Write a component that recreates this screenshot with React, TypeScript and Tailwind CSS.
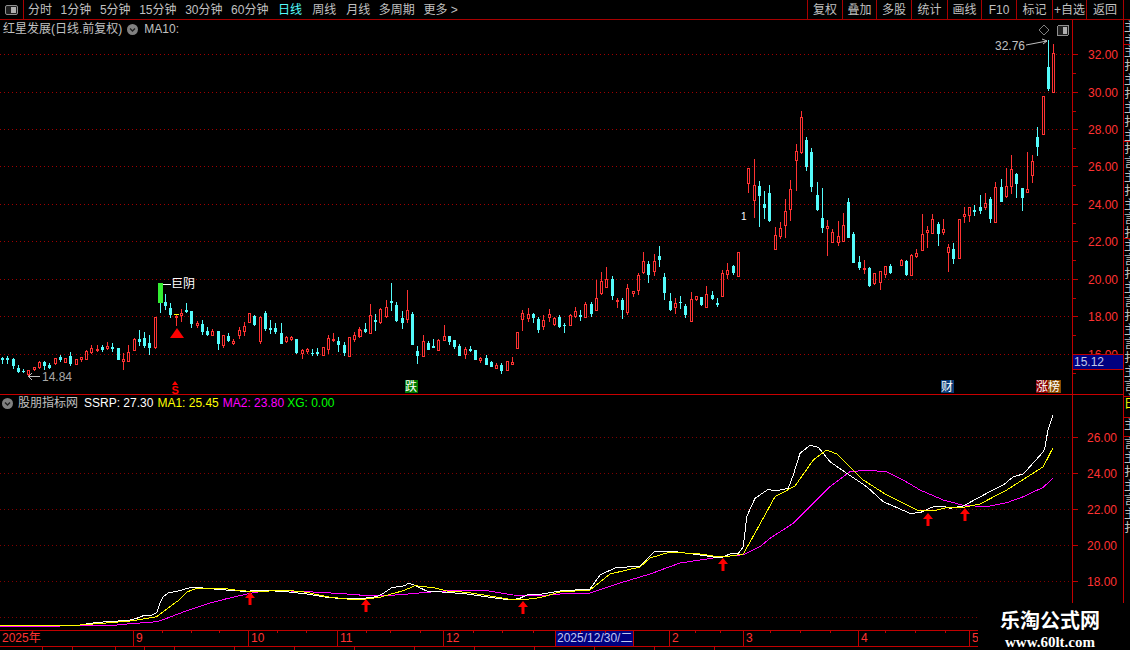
type Raw = [number, number, number, number, number, "r" | "c"];

// candles, read off in zoomed coordinates: x, high, body top, body bottom, low
const groupA: Raw[] = [
  [7,260,264,268,278,"c"],[21,258,264,266,278,"c"],[40,264,268,286,294,"c"],[55,285,293,302,306,"c"],[70,298,302,304,306,"c"],
  [85,300,300,312,316,"r"],[103,292,292,297,300,"r"],[118,272,276,290,294,"r"],[133,274,276,286,296,"c"],[148,280,284,290,294,"c"],
  [166,264,265,279,282,"r"],[181,256,260,268,274,"c"],[196,264,265,275,276,"r"],[211,246,258,280,284,"c"],[229,266,268,281,282,"r"],
  [244,260,262,266,272,"r"],[259,240,244,266,268,"r"],[274,224,234,245,248,"r"],[291,226,236,237,242,"r"],[307,226,230,236,242,"c"],
  [322,216,228,234,238,"r"],[337,220,232,234,242,"c"],[355,234,234,266,268,"c"],[370,250,268,274,296,"r"],[385,226,246,272,274,"r"],
  [403,204,208,239,240,"r"],[418,180,208,212,224,"c"],[433,186,204,226,232,"c"],[448,194,220,232,252,"c"],[466,140,142,231,234,"r"],
  [496,72,96,104,118,"c"],[511,98,114,132,140,"c"],[529,135,137,140,165,"r"],[544,116,130,136,152,"r"],[559,100,120,124,126,"c"],
  [574,124,124,158,172,"c"],[592,154,160,166,172,"r"],[607,150,162,184,192,"c"],[622,170,184,192,196,"c"],[637,178,184,194,196,"r"],
  [655,184,184,218,236,"c"],[670,194,196,226,230,"r"],[685,188,198,210,214,"c"],[700,208,212,218,222,"r"],[718,172,180,196,204,"r"],
  [733,156,168,182,194,"r"],[748,128,130,156,156,"r"],[763,136,138,162,166,"c"],[781,138,140,214,218,"r"],[796,124,130,174,180,"c"],
  [811,150,174,177,188,"c"],[826,160,174,184,190,"c"],[844,160,190,218,220,"c"],[859,198,202,214,216,"r"],[874,198,202,208,210,"r"],
  [889,208,208,246,250,"c"],[907,238,240,250,264,"r"],[922,235,238,244,248,"r"],[937,238,248,249,254,"c"],[952,234,246,250,254,"c"],
  [970,232,232,254,256,"r"],[985,196,204,236,248,"r"],[1000,190,208,209,214,"r"],[1015,202,214,222,242,"c"],[1033,216,226,246,254,"c"],
  [1048,200,202,257,258,"r"],[1063,186,196,208,214,"r"],[1078,172,178,198,200,"r"],
];

const groupB: Raw[] = [
  [0,270,270,288,288,"r"],[16,250,266,274,276,"c"],[31,192,226,278,278,"r"],[46,222,240,242,270,"c"],[61,205,207,247,248,"r"],
  [79,180,202,228,230,"r"],[94,128,183,185,210,"c"],[109,186,196,240,242,"c"],[127,214,234,246,264,"c"],[142,150,211,237,245,"r"],
  [157,216,222,312,312,"c"],[172,318,334,345,368,"c"],[190,285,304,347,348,"r"],[205,304,309,326,328,"c"],[220,297,318,320,322,"c"],
  [235,298,300,329,330,"r"],[253,255,289,299,300,"r"],[268,288,288,302,312,"c"],[283,300,300,318,324,"c"],[298,312,318,344,346,"c"],
  [316,322,327,341,354,"r"],[331,318,326,329,334,"c"],[346,330,330,357,358,"c"],[361,350,354,360,366,"r"],[379,346,354,372,372,"c"],
  [394,362,366,378,378,"c"],[409,370,376,383,384,"r"],[424,370,375,390,398,"c"],[442,364,364,389,390,"r"],[457,350,366,372,372,"r"],
  [472,277,277,323,324,"r"],[487,210,220,236,270,"r"],[505,204,222,234,244,"r"],[520,220,222,231,246,"c"],[535,232,238,267,276,"c"],
  [550,225,240,258,268,"r"],[568,207,222,231,244,"r"],[583,230,234,252,255,"r"],[598,226,232,259,262,"c"],[613,250,254,256,276,"c"],
  [631,222,226,254,256,"r"],[646,200,214,228,232,"r"],[661,210,226,228,240,"c"],[676,186,192,231,232,"r"],[694,186,192,219,228,"c"],
  [709,120,175,209,210,"r"],[724,96,124,159,162,"r"],[739,82,118,140,142,"r"],[757,108,117,165,178,"c"],[772,174,180,182,202,"r"],
  [787,174,180,207,234,"c"],[802,132,144,216,222,"r"],[820,154,154,160,168,"r"],[835,98,105,150,162,"r"],[850,36,64,96,100,"r"],
  [865,62,72,102,126,"c"],[883,42,64,92,104,"r"],[898,18,48,56,78,"c"],[913,99,111,156,178,"c"],[931,159,183,207,210,"c"],
  [946,174,190,200,219,"r"],[961,168,185,187,204,"c"],[976,192,198,222,231,"c"],[994,156,178,242,243,"r"],[1009,168,169,177,180,"r"],
  [1024,171,171,192,195,"c"],[1039,138,162,200,202,"r"],[1057,153,165,175,178,"c"],[1072,174,189,191,198,"c"],[1087,90,99,167,168,"r"],
  [1102,69,91,102,114,"r"],[1120,75,78,96,102,"c"],[1135,36,36,107,108,"r"],
];

const groupC: Raw[] = [
  [55,205,205,248,276,"r"],[73,177,255,300,351,"r"],[88,243,258,285,378,"c"],[103,273,312,321,354,"c"],[118,255,279,360,363,"c"],
  [136,381,405,447,447,"r"],[151,366,384,408,414,"r"],[166,297,333,375,411,"r"],[181,240,267,327,360,"r"],[199,132,153,180,270,"r"],
  [214,33,51,156,159,"r"],[229,111,120,198,210,"c"],[244,144,156,258,273,"c"],[262,246,285,327,330,"c"],[277,264,354,381,396,"c"],
  [292,360,378,384,465,"r"],[307,387,396,426,426,"r"],[325,363,408,426,435,"r"],[340,339,375,423,423,"r"],[355,294,306,411,411,"c"],
  [370,396,402,486,486,"c"],[388,468,486,501,507,"c"],[403,480,504,506,519,"r"],[418,501,504,555,558,"c"],[433,519,519,549,552,"r"],
  [451,513,514,546,567,"r"],[466,498,498,522,531,"r"],[481,492,498,516,519,"c"],[514,477,480,495,495,"r"],[529,480,483,522,525,"c"],
  [544,462,465,525,525,"r"],[559,447,459,468,471,"r"],[577,342,402,450,450,"r"],[592,378,390,396,441,"r"],[607,342,357,399,399,"r"],
  [625,366,372,399,435,"c"],[640,357,387,396,402,"r"],[655,432,441,456,513,"r"],[670,429,447,474,489,"c"],[688,357,357,474,474,"r"],
  [703,321,342,348,366,"r"],[718,321,321,345,363,"r"],[733,315,330,332,345,"c"],[751,285,321,330,339,"c"],[766,279,309,321,327,"r"],
  [781,291,297,354,366,"c"],[796,246,261,366,366,"r"],[814,237,261,303,303,"c"],[829,204,258,288,291,"r"],[844,165,207,258,279,"r"],
  [859,219,222,249,291,"c"],[877,264,264,291,330,"c"],[892,156,267,276,276,"r"],[907,165,183,225,246,"r"],[922,81,111,138,165,"c"],
];

const toPage = (list: Raw[], ox: number, oy: number) =>
  list.map(([x, hi, top, bot, lo, kind]) => ({
    x: Math.round(ox + x / 3),
    hi: Math.round(oy + hi / 3),
    top: Math.round(oy + top / 3),
    bot: Math.round(oy + bot / 3),
    lo: Math.round(oy + lo / 3),
    kind,
  }));

const candles = [
  ...toPage(groupA, 0, 270),
  ...toPage(groupB, 360, 240),
  ...toPage(groupC, 730, 100),
  { x: 1043, hi: 96, top: 96, bot: 134, lo: 134, kind: "r" as const },
  { x: 1048, hi: 40, top: 67, bot: 88, lo: 90, kind: "c" as const },
  { x: 1053, hi: 44, top: 53, bot: 92, lo: 92, kind: "r" as const },
];

const RED = "#ff3232";
const CYAN = "#54fcfc";

const line = (a: number[][], ox: number, oy: number) =>
  a.map(([x, y]) => `${(ox + x / 3).toFixed(1)},${(oy + y / 3).toFixed(1)}`).join(" ");

// indicator curves: early part, middle part, late part
const whiteLine = [
  "0,625 60,625",
  line([[0,195],[30,190],[90,184],[140,182],[170,175],[190,167],[215,165],[230,158],[240,130],[250,110],[265,99],[295,93],[330,83],[360,83],[410,88],[480,93],[510,93],[560,92],[610,94],[680,102],[740,112],[800,117],[850,115],[890,110],[910,100],[935,83],[975,77],[985,70],[1000,74],[1040,93],[1100,97],[1160,102],[1230,112],[1290,120],[1320,115],[1340,105],[1380,103]], 80, 560),
  "560,591 590,589 600,575 615,568 640,566 655,551 670,551 700,555 720,558",
  line([[0,372],[25,370],[40,350],[50,260],[75,205],[115,178],[135,183],[175,175],[190,135],[210,70],[240,46],[265,52],[300,95],[350,130],[410,170],[460,215],[540,250],[570,248],[610,230],[640,228],[660,235],[700,228],[770,190],[820,165],[850,140],[880,132],[940,65],[945,51]], 730, 430),
  "1045,447 1048,430 1053,415",
].join(" ");

const yellowLine = [
  "0,625 46,625",
  line([[0,195],[90,188],[160,182],[230,170],[270,140],[300,118],[320,97],[340,88],[360,85],[430,85],[480,92],[540,95],[610,90],[680,97],[740,110],[800,117],[850,118],[900,112],[930,103],[970,92],[1005,77],[1060,83],[1100,93],[1160,97],[1230,108],[1290,118],[1340,118],[1380,113]], 80, 560),
  "560,592 590,590 610,574 640,567 650,558 670,552 700,554 720,557",
  line([[0,378],[40,372],[80,300],[135,200],[195,168],[250,90],[290,60],[320,72],[400,150],[470,195],[560,240],[610,243],[650,233],[700,232],[750,222],[830,180],[940,110],[968,55]], 730, 430),
].join(" ");

const magentaLine = [
  "0,626 60,626",
  line([[0,197],[90,197],[140,192],[230,185],[260,175],[320,152],[380,132],[440,116],[510,100],[560,92],[610,92],[680,95],[740,98],[800,102],[850,106],[900,108],[960,104],[1040,97],[1110,92],[1220,92],[1300,105],[1380,108]], 80, 560),
  "560,594 590,593 620,583 650,574 680,563 720,557",
  line([[40,374],[90,350],[120,325],[190,280],[300,170],[360,125],[410,121],[470,125],[520,150],[570,180],[640,210],[700,226],[770,230],[830,218],[880,200],[940,172],[968,145]], 730, 430),
].join(" ");

const upperPrices = [
  [54, "32.00"], [92, "30.00"], [129, "28.00"], [166, "26.00"], [204, "24.00"], [241, "22.00"], [279, "20.00"], [316, "18.00"], [354, "16.00"],
] as const;
const lowerPrices = [
  [437, "26.00"], [473, "24.00"], [509, "22.00"], [545, "20.00"], [581, "18.00"], [617, ""],
] as const;
const arrows = [[250, 592], [366, 599], [523, 601], [723, 558], [928, 513], [965, 508]];

const navItems: [string, string][] = [
  ["分时", ""], ["1分钟", ""], ["5分钟", ""], ["15分钟", ""], ["30分钟", ""], ["60分钟", ""],
  ["日线", "ml-[1px] text-[#54fcfc]"], ["周线", "ml-[1.5px]"], ["月线", "ml-[1.5px]"], ["多周期", ""], ["更多 >", ""],
];
const buttons: [string, string][] = [
  ["复权", "w-[35px]"], ["叠加", "w-[34px]"], ["多股", "w-[35px]"], ["统计", "w-[36px]"], ["画线", "w-[34px]"],
  ["F10", "w-[35px]"], ["标记", "w-[36px]"], ["+自选", "w-[34px]"], ["返回", "w-[37px]"],
];
const axisCells: [string, string][] = [
  ["2025年", "w-[133px]"], ["9", "w-[115px]"], ["10", "w-[89px]"], ["11", "w-[106px]"], ["12", "w-[112px]"],
];
const axisCellsEnd: [string, string][] = [
  ["2", "w-[74px]"], ["3", "w-[115px]"], ["4", "w-[111px]"], ["5", "w-[9px]"],
];
const sideSections: [string, string, string][] = [
  ["主主", "h-[25px]", "text-[#c0c0c0]"],
  ["主扌主扌主扌主", "h-[97px]", "text-[#c0c0c0]"],
  ["扌言主扌主言扌", "h-[97px]", "text-[#c0c0c0]"],
  ["主言扌主言扌主言扌主言主", "h-[158px]", "text-[#c0c0c0]"],
  ["日", "h-[21px]", "text-[#ffff00]"],
  ["主", "h-[19px]", "text-[#c0c0c0]"],
  ["言主扌主言主扌", "h-[173px]", "text-[#c0c0c0]"],
];
const stripWidths = ["w-[43px]", "w-[30px]", "w-[43px]", "w-[29px]", "w-[30px]", "w-[60px]", "w-[60px]", "w-[60px]", "w-[60px]", "w-[60px]", "w-[60px]", "w-[60px]", "w-[60px]", "w-[60px]"];

function PanelIcon() {
  return (
    <svg width="13" height="10" viewBox="0 0 13 10">
      <rect x="0.5" y="0.5" width="12" height="9" rx="1.5" fill="#202020" stroke="#909090" />
      <rect x="6" y="2" width="5" height="6" fill="#b0b0b0" />
    </svg>
  );
}

function ChevronBadge() {
  return (
    <svg width="11" height="11" viewBox="0 0 11 11">
      <circle cx="5.5" cy="5.5" r="5.5" fill="#808080" />
      <path d="M3 4.5 L5.5 7 L8 4.5" fill="none" stroke="#202020" strokeWidth="1.4" />
    </svg>
  );
}

function Dotted({ y, to = 1072, color = "#a00000" }: { y: number; to?: number; color?: string }) {
  return <line x1="0" x2={to} y1={y + 0.5} y2={y + 0.5} stroke={color} strokeDasharray="1 3" shapeRendering="auto" />;
}

function Marker({ x, w, label, bg }: { x: number; w: number; label: string; bg: string }) {
  return (
    <g>
      <rect x={x} y="380" width={w} height="13" fill={bg} />
      <text x={x} y="391" fontSize="12" fill="#ffffff">{label}</text>
    </g>
  );
}

function UpperChart() {
  return (
    <svg className="block" width="1123" height="374" viewBox="0 20 1123 374" shapeRendering="crispEdges">
      {upperPrices.map(([y]) => <Dotted key={y} y={y} />)}
      {candles.map((c, i) =>
        c.kind === "c" ? (
          <g key={i} fill={CYAN}>
            <rect x={c.x} y={c.hi} width="1" height={c.lo - c.hi + 1} />
            <rect x={c.x - 1} y={c.top} width="3" height={c.bot - c.top + 1} />
          </g>
        ) : (
          <g key={i}>
            <rect x={c.x} y={c.hi} width="1" height={c.lo - c.hi + 1} fill={RED} />
            <rect x={c.x - 0.5} y={c.top + 0.5} width="2" height={Math.max(c.bot - c.top, 1)} fill="#000000" stroke={RED} />
          </g>
        ),
      )}
      {/* 巨阴 bar */}
      <rect x="160" y="303" width="1" height="10" fill={CYAN} />
      <rect x="158" y="283" width="5" height="20" fill="#33ee33" />
      <rect x="163" y="284" width="8" height="1" fill="#ffffff" />
      <text x="171" y="288" fontSize="12" fill="#ffffff">巨阴</text>
      <rect x="174" y="314" width="5" height="1" fill="#ffff00" />
      <polygon points="177,328 184,338 170,338" fill="#ff0000" shapeRendering="auto" />
      <polygon points="175,381 178,385 172,385" fill="#ff0000" shapeRendering="auto" />
      <text x="171.5" y="393.5" fontSize="11" fontWeight="700" fill="#ff0000">S</text>

      <rect x="28" y="376" width="12" height="1" fill="#c0c0c0" />
      <polyline points="32,373 28.5,376.5 32,380" fill="none" stroke="#c0c0c0" shapeRendering="auto" />
      <text x="42" y="381" fontSize="12" fill="#a8a8a8">14.84</text>
      <text x="995" y="50" fontSize="12" fill="#c0c0c0">32.76</text>
      <polyline points="1026,45 1047,41" fill="none" stroke="#c0c0c0" shapeRendering="auto" />
      <polyline points="1042,39 1047,41 1043,44" fill="none" stroke="#c0c0c0" shapeRendering="auto" />
      <polygon points="1044,25 1049,30 1044,35 1039,30" fill="none" stroke="#808080" shapeRendering="auto" />
      <g transform="translate(1057 25)">
        <rect x="0.5" y="0.5" width="11" height="10" rx="1.5" fill="#202020" stroke="#909090" />
        <rect x="6" y="2" width="4" height="7" fill="#b0b0b0" />
      </g>
      <text x="741" y="220" fontSize="10" fill="#ffffff">1</text>

      <Marker x={405} w={13} label="跌" bg="#007a00" />
      <Marker x={941} w={13} label="财" bg="#0a3c78" />
      <Marker x={1036} w={12} label="涨" bg="#8a0000" />
      <Marker x={1048} w={13} label="榜" bg="#8a4c00" />

      {/* price scale */}
      <rect x="1072" y="20" width="1" height="374" fill="#c00000" />
      {upperPrices.map(([y, label]) => (
        <g key={y}>
          <rect x="1073" y={y} width="5" height="1" fill="#c00000" />
          <rect x="1073" y={y + 19} width="3" height="1" fill="#c00000" />
          <text x="1088" y={y + 4.5} fontSize="12" fill={RED}>{label}</text>
        </g>
      ))}
    </svg>
  );
}

function LowerChart() {
  return (
    <svg className="block" width="1123" height="235" viewBox="0 395 1123 235">
      <g shapeRendering="crispEdges">
        {lowerPrices.map(([y]) => <Dotted key={y} y={y} color="#800000" />)}
        <rect x="1072" y="395" width="1" height="235" fill="#c00000" />
        {lowerPrices.map(([y, label]) => (
          <g key={y}>
            <rect x="1073" y={y} width="5" height="1" fill="#c00000" />
            <text x="1087" y={y + 4.5} fontSize="12" fill={RED}>{label}</text>
          </g>
        ))}
      </g>
      <g shapeRendering="crispEdges" fill="none" strokeWidth="1">
        <polyline points={magentaLine} stroke="#ff00ff" />
        <polyline points={whiteLine} stroke="#ffffff" />
        <polyline points={yellowLine} stroke="#ffff00" />
      </g>
      {arrows.map(([x, y]) => (
        <polygon
          key={x}
          points={`${x},${y} ${x + 5},${y + 6} ${x + 1.5},${y + 6} ${x + 1.5},${y + 13} ${x - 1.5},${y + 13} ${x - 1.5},${y + 6} ${x - 5},${y + 6}`}
          fill="#ff0000"
        />
      ))}
    </svg>
  );
}

export default function App() {
  return (
    <div className="relative flex flex-col w-[1130px] h-[650px] overflow-hidden bg-black text-[12px] leading-[14px] text-[#c0c0c0] font-['Liberation_Sans','Noto_Sans_CJK_SC',sans-serif]">
      {/* top toolbar */}
      <div className="flex h-[20px] shrink-0 items-stretch border-b border-[#a80000]">
        <div className="flex w-[24px] items-center justify-center border-r border-[#a80000] pr-[1px]">
          <PanelIcon />
        </div>
        <div className="flex flex-1 items-center gap-[8.6px] pl-[4px]">
          {navItems.map(([item, cls]) => (
            <span key={item} className={cls}>{item}</span>
          ))}
        </div>
        {buttons.map(([label, width]) => (
          <div key={label} className={`flex items-center justify-center border-l border-[#a80000] ${width}`}>{label}</div>
        ))}
        <div className="w-[7px] border-l border-[#a80000]" />
      </div>

      <div className="flex flex-1 min-h-0">
        <div className="flex w-[1123px] flex-col">
          {/* candlestick pane */}
          <div className="relative h-[375px] border-b border-[#c80000]">
            <UpperChart />
            <div className="absolute left-[3px] top-[2px] flex items-center">
              <span>红星发展(日线.前复权)</span>
              <span className="ml-[5px] flex"><ChevronBadge /></span>
              <span className="ml-[6px]">MA10:</span>
            </div>
            <div className="absolute left-[1073px] top-[334px] flex h-[16px] w-[50px] items-center border-y border-[#c00000] bg-[#000080] pl-[1px] text-[#c0c8e8]">
              15.12
            </div>
          </div>

          {/* indicator pane */}
          <div className="relative h-[235px]">
            <LowerChart />
            <div className="absolute left-[2px] top-[1px] flex items-center">
              <ChevronBadge />
              <span className="ml-[5px]">股朋指标网</span>
              <span className="ml-[6px] text-white">SSRP: 27.30</span>
              <span className="ml-[4px] text-[#ffff00]">MA1: 25.45</span>
              <span className="ml-[4px] text-[#ff00ff]">MA2: 23.80</span>
              <span className="ml-[3px] text-[#00ff00]">XG: 0.00</span>
            </div>
          </div>

          {/* time axis */}
          <div className="relative flex h-[17px] border-y border-[#c00000] text-[#ff3232]">
            {axisCells.map(([label, width], i) => (
              <div key={label} className={`${width} pl-[2px] leading-[15px] ${i > 0 ? "border-l border-[#c00000]" : ""}`}>{label}</div>
            ))}
            <div className="w-[78px] border-l border-[#c00000] bg-[#000080] pl-[1px] leading-[15px] text-[#c0c8f0]">2025/12/30/二</div>
            <div className="w-[36px] border-l border-[#c00000]" />
            {axisCellsEnd.map(([label, width]) => (
              <div key={label} className={`${width} border-l border-[#c00000] pl-[2px] leading-[15px]`}>{label}</div>
            ))}
            <svg className="absolute left-0 top-0" width="978" height="3" shapeRendering="crispEdges">
              {[162, 191, 219, 277, 306, 366, 390, 420, 473, 502, 533, 580, 605, 695, 720, 770, 800, 830, 885, 915, 945].map((x) => (
                <rect key={x} x={x} y="0" width="1" height="2" fill="#c00000" />
              ))}
            </svg>
          </div>
        </div>

        {/* cut-off side column */}
        <div className="w-[7px] overflow-hidden border-l border-[#c00000]">
          {sideSections.map(([chars, height, color], i) => (
            <div key={i} className={`${height} w-[14px] overflow-hidden border-b border-[#c00000] leading-[14px] ${color}`}>
              {chars.split("").map((c, j) => <div key={j}>{c}</div>)}
            </div>
          ))}
        </div>
      </div>

      {/* status strip, mostly out of view */}
      <div className="flex h-[3px] shrink-0">
        {stripWidths.map((w, i) => (
          <div key={i} className={`${w} border-r border-[#c00000]`} />
        ))}
      </div>

      {/* watermark */}
      <div className="absolute left-[978px] top-[603px] flex h-[47px] w-[152px] flex-col items-center bg-black pr-[8px] font-['Liberation_Serif','Noto_Sans_CJK_SC',serif] font-bold text-white">
        <div className="mt-[6px] text-[20px] leading-[24px]">乐淘公式网</div>
        <div className="mt-[2px] text-[15px] leading-[15px]">www.60lt.com</div>
      </div>
    </div>
  );
}
